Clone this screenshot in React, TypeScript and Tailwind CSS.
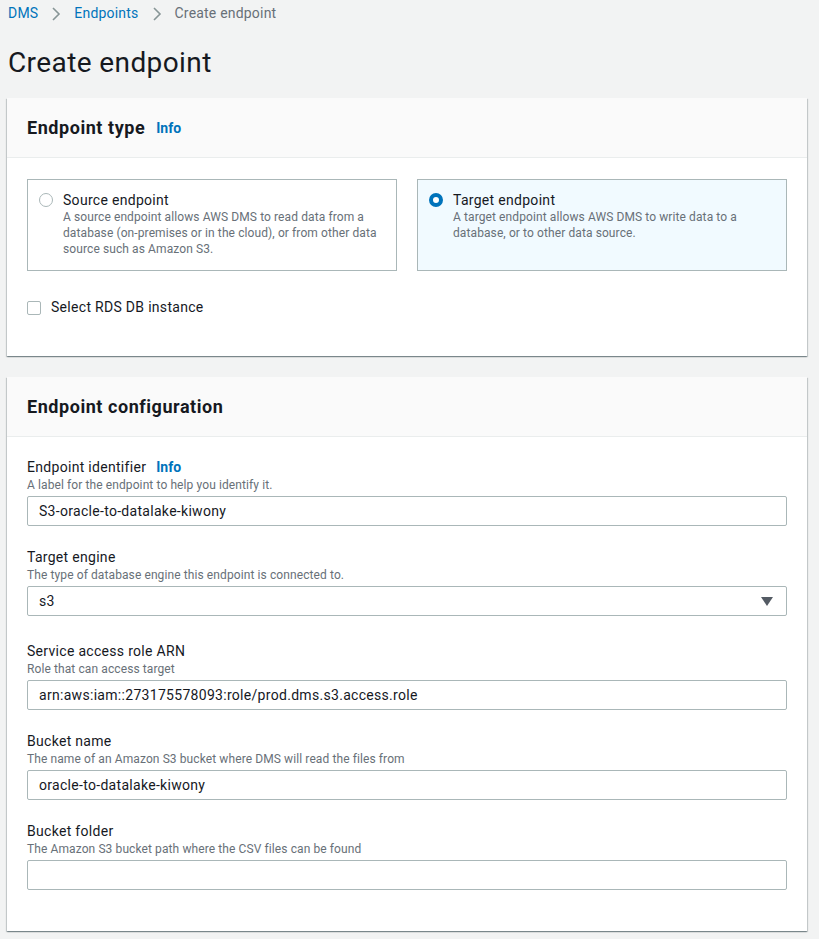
import React from "react";

const font = { fontFamily: "Roboto, 'Liberation Sans', Arial, sans-serif" };

function Chevron() {
  return (
    <svg width="10" height="16" viewBox="0 0 10 16" className="mx-[13px]">
      <path d="M2 2 L8 8 L2 14" fill="none" stroke="#879596" strokeWidth="1.6" />
    </svg>
  );
}

function Panel({ title, info, children }: { title: string; info?: boolean; children: React.ReactNode }) {
  return (
    <div className="ml-[7px] mr-[12px] bg-white shadow-[0_1px_1px_0_rgba(0,28,36,0.3),1px_1px_1px_0_rgba(0,28,36,0.15),-1px_1px_1px_0_rgba(0,28,36,0.15)]">
      <div className="h-[60px] bg-[#fafafa] border-b border-[#eaeded] flex items-center px-[20px]">
        <span className="text-[18px] font-bold text-[#16191f] tracking-[0.55px]">{title}</span>
        {info && <span className="ml-[11px] mt-[2px] text-[14px] font-bold text-[#0073bb]">Info</span>}
      </div>
      {children}
    </div>
  );
}

function Field({ label, desc, value, info, select, extra }: { label: string; desc: string; value: string; info?: boolean; select?: boolean; extra?: boolean }) {
  return (
    <div className={extra ? "flex flex-col mt-[4px]" : "flex flex-col"}>
      <div className="h-[20px] flex items-center text-[14px] text-[#16191f] tracking-[0.3px]">
        {label}
        {info && <span className="ml-[10px] font-bold text-[#0073bb] tracking-normal">Info</span>}
      </div>
      <div className="h-[16px] flex items-center text-[12px] text-[#687078] tracking-[0.1px]">{desc}</div>
      <div className="mt-[3px] h-[30px] border border-[#aab7b8] rounded-[2px] flex items-center pl-[11px] pr-[13px] text-[14px] text-[#16191f] bg-white tracking-[0.3px]">
        <span className="flex-1">{value}</span>
        {select && (
          <svg width="12" height="9" viewBox="0 0 12 9">
            <path d="M0 0 H12 L6 9 Z" fill="#545b64" />
          </svg>
        )}
      </div>
    </div>
  );
}

export default function App() {
  return (
    <div className="w-[819px] h-[939px] bg-[#f2f3f3] overflow-hidden" style={font}>
      <div className="h-[26px] pt-[1px] flex items-center pl-[8px] text-[14px] tracking-[0.2px]">
        <span className="text-[#0073bb]">DMS</span>
        <Chevron />
        <span className="text-[#0073bb]">Endpoints</span>
        <Chevron />
        <span className="text-[#687078]">Create endpoint</span>
      </div>
      <div className="h-[72px] flex items-center pl-[8px] pt-[2px]">
        <h1 className="text-[28px] text-[#16191f] leading-none tracking-[0.4px]">Create endpoint</h1>
      </div>

      <Panel title="Endpoint type" info>
        <div className="px-[20px] pt-[21px] pb-[38px]">
          <div className="grid grid-cols-2 gap-[20px]">
            <div className="h-[92px] border border-[#aab7b8] bg-white flex pl-[11px] pt-[11px] pr-[12px]">
              <div className="w-[14px] h-[14px] mt-[2px] rounded-full border border-[#aab7b8] bg-white shrink-0" />
              <div className="ml-[10px]">
                <div className="text-[14px] leading-[18px] text-[#16191f] tracking-[0.3px]">Source endpoint</div>
                <div className="text-[12px] leading-[16px] text-[#687078] tracking-[0.1px]">
                  A source endpoint allows AWS DMS to read data from a database (on-premises or in the cloud), or from other data source such as Amazon S3.
                </div>
              </div>
            </div>
            <div className="h-[92px] border border-[#aab7b8] bg-[#f1faff] flex pl-[11px] pt-[11px] pr-[12px]">
              <div className="w-[14px] h-[14px] mt-[2px] rounded-full border-[4px] border-[#0073bb] bg-white shrink-0" />
              <div className="ml-[10px]">
                <div className="text-[14px] leading-[18px] text-[#16191f] tracking-[0.3px]">Target endpoint</div>
                <div className="text-[12px] leading-[16px] text-[#687078] tracking-[0.1px]">
                  A target endpoint allows AWS DMS to write data to a database, or to other data source.
                </div>
              </div>
            </div>
          </div>
          <div className="mt-[26px] flex items-center">
            <div className="w-[14px] h-[14px] border border-[#aab7b8] rounded-[2px] bg-white" />
            <span className="ml-[10px] text-[14px] text-[#16191f] tracking-[0.3px]">Select RDS DB instance</span>
          </div>
        </div>
      </Panel>

      <div className="h-[21px]" />

      <Panel title="Endpoint configuration">
        <div className="px-[20px] pt-[20px] pb-[41px] flex flex-col gap-[21px]">
          <Field label="Endpoint identifier" info desc="A label for the endpoint to help you identify it." value="S3-oracle-to-datalake-kiwony" />
          <Field label="Target engine" desc="The type of database engine this endpoint is connected to." value="s3" select />
          <Field extra label="Service access role ARN" desc="Role that can access target" value="arn:aws:iam::273175578093:role/prod.dms.s3.access.role" />
          <Field label="Bucket name" desc="The name of an Amazon S3 bucket where DMS will read the files from" value="oracle-to-datalake-kiwony" />
          <Field label="Bucket folder" desc="The Amazon S3 bucket path where the CSV files can be found" value="" />
        </div>
      </Panel>
    </div>
  );
}
